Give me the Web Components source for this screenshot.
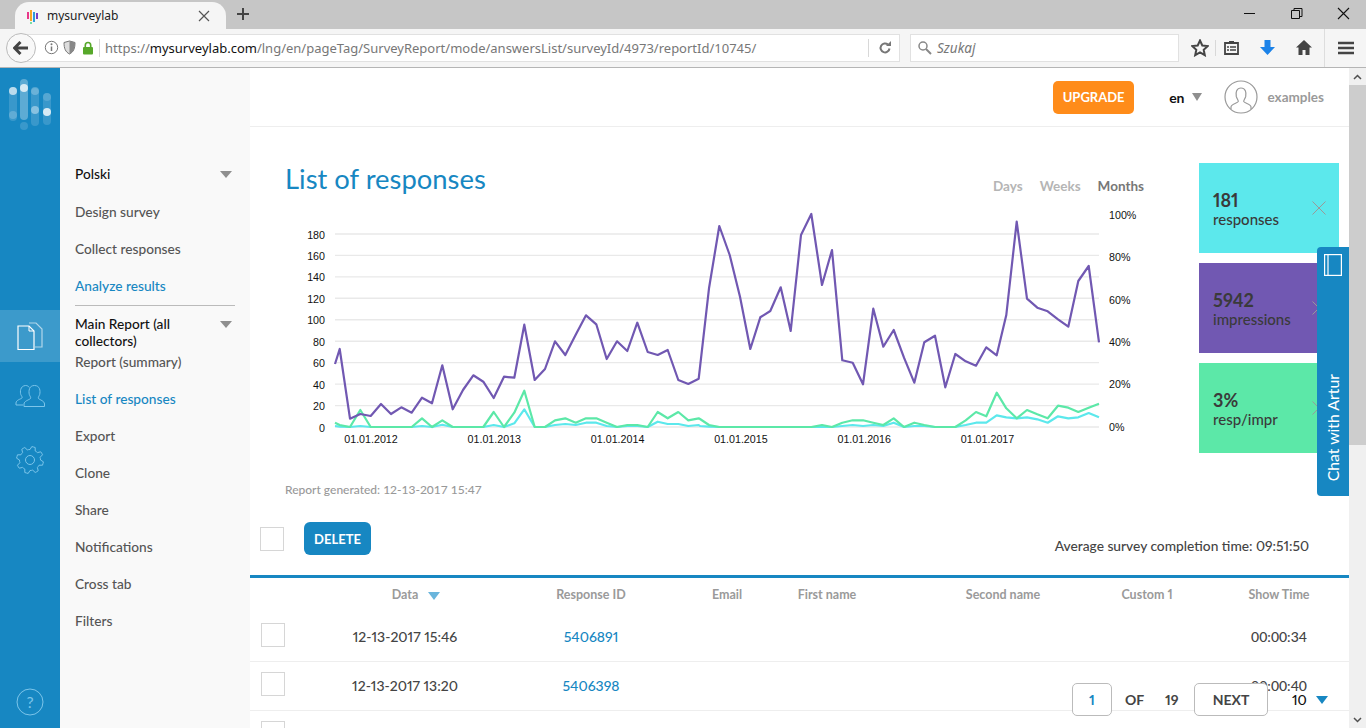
<!DOCTYPE html>
<html lang="en">
<head>
<meta charset="utf-8">
<title>mysurveylab</title>
<style>
  html, body { margin: 0; height: 100%; overflow: hidden; background: #fff; }
  body { font-family: Lato, "Open Sans", sans-serif; color: #444; position: relative; }
  .app { display: flex; height: 660px; }
</style>
</head>
<body>
<browser-chrome></browser-chrome>
<div class="app">
  <app-rail></app-rail>
  <side-nav></side-nav>
  <report-page>
    <stat-card slot="cards" value="181" label="responses" color="#5ce8ec"></stat-card>
    <stat-card slot="cards" value="5942" label="impressions" color="#7158b2"></stat-card>
    <stat-card slot="cards" value="3%" label="resp/impr" color="#5ce8a8"></stat-card>
    <response-chart slot="chart"></response-chart>
    <response-table slot="table"></response-table>
  </report-page>
  <fake-scrollbar></fake-scrollbar>
</div>
<chat-tab></chat-tab>
<page-pager></page-pager>

<script>
// small helper, every element below just sets its shadow html once
class Base extends HTMLElement {
  constructor() {
    super();
    this.attachShadow({ mode: 'open' });
  }
  connectedCallback() {
    this.shadowRoot.innerHTML = this.html();
  }
}

class BrowserChrome extends Base {
  html() {
    return `
    <style>
      :host { display: block; height: 68px; background: #c6c6c6; font-family: "Noto Sans", sans-serif; box-sizing: border-box; }
      .tabs { height: 29px; display: flex; align-items: flex-end; position: relative; }
      .tab { width: 211px; height: 27px; margin-left: 15px; background: #f5f5f5; border-radius: 14px 14px 0 0; display: flex; align-items: center; padding: 0 16px 0 11px; box-sizing: border-box; font-size: 12px; color: #222; gap: 7px; }
      .tab span { flex: 1; }
      .plus { margin: 0 0 8px 10px; width: 14px; height: 14px; }
      .win { position: absolute; top: 6px; right: 15px; display: flex; gap: 32px; }
      .win svg { width: 15px; height: 15px; display: block; }
      .tools { background: #f5f5f5; border-bottom: 1px solid #b5b5b5; display: flex; align-items: center; padding: 0 0 1px 6px; box-sizing: border-box; position: relative; height: 39px; }
      .back { width: 30px; height: 30px; border-radius: 50%; background: #f8f8f8; border: 1px solid #bbb; box-sizing: border-box; display: flex; align-items: center; justify-content: center; position: relative; z-index: 1; }
      .url { width: 879px; height: 28px; margin-left: -15px; background: #fff; border: 1px solid #e1e1e1; box-sizing: border-box; display: flex; align-items: center; padding-left: 22px; }
      .url svg { flex: none; }
      .sep { width: 1px; height: 18px; background: #d8d8d8; flex: none; }
      .addr { font-size: 13px; color: #777; white-space: nowrap; margin-left: 5px; width: 763px; overflow: hidden; }
      .addr b { font-weight: 400; color: #111; }
      .search { width: 269px; height: 28px; margin-left: 10px; background: #fff; border: 1px solid #e1e1e1; box-sizing: border-box; display: flex; align-items: center; padding-left: 6px; gap: 5px; font-size: 13.500px; font-style: italic; color: #777; }
      .icons { display: flex; align-items: center; margin-left: 12px; }
    </style>
    <div class="tabs">
      <div class="tab">
        <svg width="14" height="16" viewBox="0 0 14 16"><path d="M2 4v7" stroke="#e8388a" stroke-width="2"/><path d="M5 2v11" stroke="#f5a623" stroke-width="2"/><path d="M8 4v10" stroke="#2d9cdb" stroke-width="2"/><path d="M11 5v6" stroke="#7b3fc4" stroke-width="2"/><circle cx="5" cy="15" r="1" fill="#4cd98c"/></svg>
        <span>mysurveylab</span>
        <svg width="12" height="12" viewBox="0 0 12 12"><path d="M1 1l10 10M11 1L1 11" stroke="#555" stroke-width="1.2"/></svg>
      </div>
      <svg class="plus" viewBox="0 0 14 14"><path d="M7 1v12M1 7h12" stroke="#444" stroke-width="2"/></svg>
      <div class="win">
        <svg viewBox="0 0 15 15"><path d="M2 7.5h11" stroke="#111"/></svg>
        <svg viewBox="0 0 15 15"><path d="M2.5 4.5h8v8h-8zM5 4.5v-2h8v8h-2.500" fill="none" stroke="#111"/></svg>
        <svg viewBox="0 0 15 15"><path d="M2 2l11 11M13 2L2 13" stroke="#111" stroke-width="1.1"/></svg>
      </div>
    </div>
    <div class="tools">
      <div class="back"><svg width="16" height="14" viewBox="0 0 16 14"><path d="M7.500 1L1.500 7l6 6M2 7h13" fill="none" stroke="#444" stroke-width="3"/></svg></div>
      <div class="url">
        <svg width="15" height="15" viewBox="0 0 15 15"><circle cx="7.500" cy="7.500" r="6.200" fill="none" stroke="#777"/><path d="M7.500 6.500v4.500" stroke="#777" stroke-width="1.500"/><circle cx="7.500" cy="4.300" r="1" fill="#777"/></svg>
        <svg style="margin-left:4px" width="13" height="15" viewBox="0 0 13 15"><path d="M1 2.500l5.500-1.500 5.500 1.500c0 6-1.500 9.500-5.500 11.500C2.500 12 1 8.500 1 2.500z" fill="#ddd" stroke="#777"/><path d="M6.500 1v13c4-2 5.500-5.500 5.500-11.500z" fill="#888"/></svg>
        <svg style="margin:0 5px 0 6px" width="12" height="14" viewBox="0 0 12 14"><rect x="1" y="6" width="10" height="7.500" rx="1" fill="#57a82a"/><path d="M3.300 6.500V4.200a2.700 2.700 0 0 1 5.400 0v2.300" fill="none" stroke="#57a82a" stroke-width="1.600"/></svg>
        <div class="sep"></div>
        <div class="addr">https://<b>mysurveylab.com</b>/lng/en/pageTag/SurveyReport/mode/answersList/surveyId/4973/reportId/10745/</div>
        <div class="sep"></div>
        <svg style="margin-left:9px" width="14" height="14" viewBox="0 0 14 14"><path d="M11.500 7.500a4.500 4.500 0 1 1-1.500-4" fill="none" stroke="#777" stroke-width="2"/><path d="M8 5h5V0z" fill="#777"/></svg>
      </div>
      <div class="search">
        <svg width="15" height="15" viewBox="0 0 15 15"><circle cx="6" cy="6" r="4" fill="none" stroke="#888" stroke-width="1.500"/><path d="M9 9l5 5" stroke="#888" stroke-width="2"/></svg>
        Szukaj
      </div>
      <div class="icons">
        <svg width="18" height="18" viewBox="0 0 18 18"><path d="M9 1.500l2.300 5 5.400.6-4 3.700 1.100 5.400L9 13.500l-4.800 2.700 1.100-5.400-4-3.700 5.400-.6z" fill="none" stroke="#444" stroke-width="2"/></svg>
        <div class="sep" style="margin:0 8px 0 6px;height:16px"></div>
        <svg width="15" height="15" viewBox="0 0 15 15"><path d="M1 3h13v11H1z" fill="none" stroke="#444" stroke-width="1.800"/><path d="M5 1h5v3H5z" fill="#444"/><path d="M3 7h2M6 7h6M3 10h2M6 10h6" stroke="#444" stroke-width="1.500"/></svg>
        <svg style="margin-left:21px" width="15" height="15" viewBox="0 0 15 15"><path d="M4.500 0h6v7H15l-7.500 8L0 7h4.500z" fill="#1b82e8"/></svg>
        <svg style="margin-left:21px" width="16" height="15" viewBox="0 0 16 15"><path d="M8 0L0 7.500h2.500V15h4v-5h3v5h4V7.500H16z" fill="#444"/></svg>
        <div class="sep" style="margin:0 13px 0 12px;height:38px;background:#ddd"></div>
        <svg width="16" height="14" viewBox="0 0 16 14"><path d="M0 2h16M0 7h16M0 12h16" stroke="#444" stroke-width="2.600"/></svg>
      </div>
    </div>`;
  }
}

class AppRail extends Base {
  html() {
    // gear outline is worked out here, easier than typing out 8 teeth
    let gear = '';
    for (let i = 0; i < 48; i++) {
      const a = (i / 48) * Math.PI * 2;
      const r = (i % 6 < 3) ? 13.5 : 10.5;
      gear += (i ? 'L' : 'M') + (14 + Math.cos(a + .13) * r).toFixed(1) + ' ' + (14 + Math.sin(a + .13) * r).toFixed(1);
    }
    return `
    <style>
      :host { display: flex; flex-direction: column; width: 60px; flex: none; background: #1787c2; align-items: center; position: relative; }
      .logo { width: 60px; height: 70px; margin-top: 8px; flex: none; display: block; }
      .item { width: 60px; flex: none; display: flex; align-items: center; justify-content: center; }
      .docs { height: 52px; margin-top: 164px; background: rgba(255,255,255,.16); }
      .people { height: 40px; margin-top: 14px; }
      .gear { height: 40px; margin-top: 24px; }
      .help { margin-top: auto; margin-bottom: 12px; height: 28px; }
    </style>
    <svg class="logo" viewBox="0 76 60 70">
      <g fill="#fff">
        <rect x="9" y="87" width="8" height="34" rx="4" opacity=".15"/>
        <rect x="20" y="79" width="8" height="41" rx="4" opacity=".3"/>
        <rect x="31" y="88" width="8" height="38" rx="4" opacity=".15"/>
        <rect x="43" y="93" width="8" height="32" rx="4" opacity=".15"/>
        <circle cx="13" cy="91" r="4" opacity=".65"/>
        <circle cx="13" cy="115" r="4" opacity=".2"/>
        <circle cx="24" cy="88" r="4" opacity=".75"/>
        <circle cx="24" cy="126" r="4" opacity=".15"/>
        <circle cx="35" cy="91" r="4" opacity=".25"/>
        <circle cx="35" cy="110" r="4" opacity=".4"/>
        <circle cx="47" cy="97" r="4" opacity=".15"/>
        <circle cx="47" cy="112" r="4" opacity=".8"/>
      </g>
    </svg>
    <div class="item docs">
      <svg width="26" height="30" viewBox="0 0 26 30" fill="none"><path d="M12 2h7l6 6v18h-7" stroke="#fff" stroke-opacity=".6" stroke-width="1.200"/><path d="M1 5h11l5 5v18.500H1z" stroke="#fff" stroke-width="1.200"/><path d="M12 5v5h5" stroke="#fff" stroke-width="1"/></svg>
    </div>
    <div class="item people">
      <svg width="30" height="24" viewBox="0 0 30 24" fill="none" stroke="#7cc5ea" stroke-width="1"><path d="M8 21H1v-2c0-3 5-4 6-5 .6-1-.6-2-1.200-3.500C5 8 5 2 10.500 1.500c2 0 3 .8 3.800 2"/><path d="M9 22.500v-2.500c0-3 5-4 6.500-5.500.7-1-.6-2.300-1.200-4C13.500 7 14 1.500 19.500 1.500S25.500 7 24.700 10.500c-.6 1.700-1.900 3-1.200 4 1.500 1.500 6 2.500 6 5.500v2.500z"/></svg>
    </div>
    <div class="item gear">
      <svg width="28" height="28" viewBox="0 0 28 28" fill="none" stroke="#7cc5ea" stroke-width="1"><path d="${gear}Z"/><circle cx="14" cy="14" r="4.500"/></svg>
    </div>
    <div class="item help">
      <svg width="28" height="28" viewBox="0 0 28 28" fill="none"><circle cx="14" cy="14" r="13" stroke="#7cc5ea"/><text x="14" y="19.500" text-anchor="middle" font-family="Lato, sans-serif" font-size="16" fill="#7cc5ea">?</text></svg>
    </div>`;
  }
}

class SideNav extends Base {
  html() {
    const item = (t, on) => `<a class="${on ? 'on' : ''}">${t}</a>`;
    return `
    <style>
      :host { display: block; width: 190px; flex: none; background: #f9f9f9; font-size: 13.700px; font-weight: 500; padding: 97px 15px 0; box-sizing: border-box; color: #555; }
      .head { display: flex; justify-content: space-between; color: #111; line-height: 17px; }
      .head i { flex: none; width: 0; height: 0; border: 6px solid transparent; border-top: 7px solid #8f8f8f; border-bottom: 0; margin: 6px 3px 0 0; }
      a { display: block; line-height: 17px; margin-top: 20px; white-space: nowrap; }
      .head:not(.sub) + a { margin-top: 21px; }
      a.on { color: #1787c2; }
      hr { border: 0; border-top: 1px solid #bbb; margin: 11px 0 9px; }
      .head.sub + a { margin-top: 4px; }
      .head span { width: 130px; }
    </style>
    <div class="head"><span>Polski</span><i></i></div>
    ${item('Design survey')}
    ${item('Collect responses')}
    ${item('Analyze results', true)}
    <hr>
    <div class="head sub"><span>Main Report (all collectors)</span><i></i></div>
    ${item('Report (summary)')}
    ${item('List of responses', true)}
    ${item('Export')}
    ${item('Clone')}
    ${item('Share')}
    ${item('Notifications')}
    ${item('Cross tab')}
    ${item('Filters')}`;
  }
}

class StatCard extends Base {
  html() {
    return `
    <style>
      :host { display: flex; align-items: center; justify-content: space-between; width: 140px; height: 90px; box-sizing: border-box; padding: 0 13px 0 14px; background: ${this.getAttribute('color')}; color: #3a3a3a; font-variant-numeric: proportional-nums; }
      b { display: block; font-size: 18px; line-height: 22px; font-weight: 700; }
      span { display: block; font-size: 15px; line-height: 17px; font-weight: 500; }
      svg { flex: none; }
    </style>
    <div><b>${this.getAttribute('value')}</b><span>${this.getAttribute('label')}</span></div>
    <svg width="14" height="14" viewBox="0 0 14 14"><path d="M.5.500l13 13M13.500.500l-13 13" stroke="#999"/></svg>`;
  }
}

const toPts = (list, ox) => list.map(([x, y]) => [ox + x / 3, 200 + y / 3]);
const PURPLE = [...toPts([[165,492],[179,447],[210,656],[241,642],[272,648],[303,612],[333,642],[364,622],[395,638],[426,593],[456,610],[487,496],[518,628],[549,570],[580,526],[610,545],[641,594],[672,530],[703,533],[733,374],[764,540],[795,507],[825,424],[856,465],[887,404],[918,346],[949,373],[980,477],[1011,424],[1042,453],[1072,368],[1103,456],[1133,465],[1163,450],[1195,540],[1225,552],[1256,536]], 280),
  ...toPts([[27,265],[58,78],[89,165],[120,290],[151,447],[181,352],[211,333],[242,262],[272,393],[303,105],[334,42],[366,255],[396,150],[427,481],[458,488],[489,553],[520,326],[550,440],[581,390],[612,473],[643,548],[673,427],[705,407],[736,562],[766,462],[797,484],[828,497],[859,442],[890,466],[919,345],[950,65],[981,296],[1012,323],[1043,334],[1074,358],[1105,380],[1135,243],[1166,198],[1197,427]], 700)];
const GREEN = [...toPts([[165,668],[179,675],[210,681],[241,630],[272,681],[395,681],[426,655],[456,681],[487,661],[518,681],[610,681],[641,636],[672,681],[703,638],[733,572],[764,681],[795,681],[825,661],[856,655],[887,668],[918,655],[949,655],[980,668],[1011,681],[1042,675],[1072,675],[1103,681],[1133,636],[1163,655],[1195,636],[1225,661],[1256,655]], 280),
  ...toPts([[0,657],[27,675],[58,681],[334,681],[366,675],[396,681],[427,668],[458,661],[489,661],[520,668],[550,675],[581,655],[612,681],[643,668],[673,675],[705,681],[766,681],[797,661],[828,636],[859,649],[890,578],[919,625],[950,655],[981,630],[1012,643],[1043,655],[1074,617],[1105,623],[1135,636],[1166,623],[1197,611]], 700)];
const CYAN = [...toPts([[165,678],[179,680],[210,681],[241,678],[272,681],[395,681],[426,678],[456,681],[487,674],[518,681],[610,681],[641,675],[672,681],[703,670],[733,628],[764,681],[795,681],[825,675],[856,672],[887,675],[918,668],[949,668],[980,678],[1011,681],[1042,678],[1072,678],[1103,681],[1133,665],[1163,672],[1195,672],[1225,678],[1256,675]], 280),
  ...toPts([[0,678],[27,680],[58,681],[334,681],[396,681],[427,678],[458,675],[489,678],[520,675],[550,678],[581,668],[612,681],[643,678],[673,678],[705,681],[766,681],[797,675],[828,668],[859,668],[890,646],[919,652],[950,655],[981,652],[1012,658],[1043,668],[1074,649],[1105,655],[1135,652],[1166,639],[1197,652]], 700)];

class ResponseChart extends Base {
  html() {
    const line = (pts, c) => `<polyline fill="none" stroke="${c}" stroke-width="2.200" stroke-linejoin="round" points="${pts.map(p => p[0].toFixed(1) + ',' + p[1].toFixed(1)).join(' ')}"/>`;
    let grid = '', left = '', right = '', years = '';
    for (let i = 0; i <= 9; i++) {
      const y = 427 - i * 21.45;
      grid += `<path d="M335 ${y.toFixed(1)}H1099" stroke="#e9e9e9" stroke-width="1.400"/>`;
      left += `<text x="325" y="${(y + 4.500).toFixed(1)}" text-anchor="end">${i * 20}</text>`;
    }
    for (let i = 0; i <= 5; i++) {
      right += `<text x="1109" y="${(430.500 - i * 42.3).toFixed(1)}">${i * 20}%</text>`;
      years += `<text x="${(371 + i * 123.300).toFixed(1)}" y="443" text-anchor="middle">01.01.${2012 + i}</text>`;
    }
    return `
    <style>
      :host { display: block; width: 870px; height: 240px; }
      svg { display: block; font-family: "Liberation Sans", Arial, sans-serif; font-size: 10.700px; fill: #111; }
    </style>
    <svg width="870" height="240" viewBox="285 205 870 240">
      ${grid}${left}${right}${years}
      ${line(CYAN, '#5ce8ec')}
      ${line(GREEN, '#5ce8a8')}
      ${line(PURPLE, '#7158b2')}
    </svg>`;
  }
}

class ReportPage extends Base {
  html() {
    return `
    <style>
      :host { display: block; width: 1099px; flex: none; overflow: hidden; background: #fff; }
      .top { height: 58px; border-bottom: 1px solid #eee; display: flex; align-items: center; justify-content: flex-end; padding-right: 25px; }
      .upgrade { width: 81px; height: 33px; border-radius: 5px; background: #ff8c1a; color: #fff; font-weight: 700; font-size: 13px; display: flex; align-items: center; justify-content: center; }
      .lang { font-weight: 700; font-size: 14px; color: #111; margin-left: 35px; display: flex; align-items: center; gap: 7px; }
      .lang i { width: 0; height: 0; border: 5.500px solid transparent; border-top: 8px solid #8f8f8f; border-bottom: 0; }
      .top svg { margin-left: 22px; }
      .user { margin-left: 10px; color: #9a9a9a; font-weight: 700; font-size: 13.500px; }
      .mid { display: flex; height: 395px; }
      .left { width: 949px; padding: 36px 0 0 35px; box-sizing: border-box; }
      .title { display: flex; justify-content: space-between; align-items: flex-end; width: 859px; height: 32px; margin-bottom: 10px; }
      h1 { margin: 0; font-size: 27.400px; line-height: 33px; font-weight: 400; color: #1787c2; }
      .range { display: flex; gap: 17px; font-size: 13.500px; font-weight: 700; color: #b5b5b5; line-height: 18px; }
      .range .on { color: #777; }
      .gen { margin-top: 37px; font-size: 12px; line-height: 16px; font-weight: 500; color: #999; }
      .cards { display: flex; flex-direction: column; gap: 10px; padding-top: 36px; }
    </style>
    <div class="top">
      <div class="upgrade">UPGRADE</div>
      <div class="lang">en<i></i></div>
      <svg width="34" height="34" viewBox="0 0 34 34" fill="none" stroke="#999" stroke-width="1.200"><circle cx="17" cy="17" r="16"/><path d="M7 29v-2c0-3 6-3.500 7.300-5.500.3-1-1.300-2.700-2-5-.9-4 .3-8.500 4.700-8.500s5.600 4.500 4.700 8.500c-.7 2.300-2.300 4-2 5 1.300 2 7.300 2.500 7.300 5.500v2"/></svg>
      <div class="user">examples</div>
    </div>
    <div class="mid">
      <div class="left">
        <div class="title"><h1>List of responses</h1>
          <div class="range"><span>Days</span><span>Weeks</span><span class="on">Months</span></div></div>
        <slot name="chart"></slot>
        <div class="gen">Report generated: 12-13-2017 15:47</div>
      </div>
      <div class="cards"><slot name="cards"></slot></div>
    </div>
    <slot name="table"></slot>`;
  }
}

class ResponseTable extends Base {
  html() {
    const row = (d, id, t) => `
      <div class="row">
        <div><i class="box"></i></div><div class="date">${d}</div><div class="id">${id}</div>
        <div></div><div></div><div></div><div></div><div class="time">${t}</div>
      </div>`;
    return `
    <style>
      :host { display: block; font-size: 14px; font-weight: 500; color: #444; }
      .tools { height: 53px; display: flex; align-items: flex-start; border-bottom: 3px solid #1787c2; padding-left: 10px; position: relative; }
      .box { display: block; width: 24px; height: 24px; box-sizing: border-box; border: 1px solid #d6d6d6; background: #fff; }
      .tools .box { margin-top: 5px; }
      .del { margin: 0 0 0 20px; width: 67px; height: 33px; border-radius: 6px; background: #1787c2; color: #fff; font-weight: 700; font-size: 13px; display: flex; align-items: center; justify-content: center; }
      .avg { margin-left: auto; margin-right: 40px; margin-top: 15px; line-height: 17px; font-size: 13.750px; font-variant-numeric: proportional-nums; }
      .grid, .row { display: grid; grid-template-columns: 46px 218px 154px 118px 82px 205px 124px 132px; text-align: center; }
      .grid > div:nth-child(6), .row > div:nth-child(6) { padding-left: 65px; }
      .grid > div:nth-child(7), .row > div:nth-child(7) { padding-left: 24px; }
      .grid > div:nth-child(8), .row > div:nth-child(8) { padding-left: 32px; }
      .grid { height: 35px; padding-bottom: 2px; align-items: center; font-size: 12.500px; font-weight: 700; color: #9a9a9a; box-sizing: border-box; font-variant-numeric: proportional-nums; }
      .grid i { display: inline-block; width: 0; height: 0; border: 6px solid transparent; border-top: 8px solid #6ab5dc; border-bottom: 0; margin: 0 -22px 0 10px; vertical-align: -1px; }
      .row { height: 49px; padding-bottom: 2px; align-items: center; border-bottom: 1px solid #eee; box-sizing: border-box; }
      .row .box { margin: -3px 0 0 11px; }
      .date, .id { font-variant-numeric: proportional-nums; }
      .id { color: #1787c2; }
    </style>
    <div class="tools"><i class="box"></i><div class="del">DELETE</div><div class="avg">Average survey completion time: 09:51:50</div></div>
    <div class="grid">
      <div></div><div>Data<i></i></div><div>Response ID</div><div>Email</div><div>First name</div><div>Second name</div><div>Custom 1</div><div>Show Time</div>
    </div>
    ${row('12-13-2017 15:46', '5406891', '00:00:34')}
    ${row('12-13-2017 13:20', '5406398', '00:00:40')}
    ${row('', '', '')}`;
  }
}

class FakeScrollbar extends Base {
  html() {
    return `
    <style>
      :host { display: flex; flex-direction: column; width: 17px; flex: none; background: #f0f0f0; }
      .btn { height: 17px; flex: none; display: flex; align-items: center; justify-content: center; }
      .thumb { height: 360px; background: #cdcdcd; flex: none; }
      .rest { flex: 1; }
    </style>
    <div class="btn"><svg width="9" height="6" viewBox="0 0 9 6"><path d="M1 5l3.500-3.500L8 5" fill="none" stroke="#505050" stroke-width="1.500"/></svg></div>
    <div class="thumb"></div><div class="rest"></div>
    <div class="btn"><svg width="9" height="6" viewBox="0 0 9 6"><path d="M1 1l3.500 3.500L8 1" fill="none" stroke="#505050" stroke-width="1.500"/></svg></div>`;
  }
}

class ChatTab extends Base {
  html() {
    return `
    <style>
      :host { position: absolute; left: 1317px; top: 247px; width: 32px; height: 249px; background: #1787c2; border-radius: 4px 0 0 4px; display: flex; flex-direction: column; align-items: center; color: #fff; font-family: Lato, sans-serif; }
      svg { margin-top: 7px; flex: none; }
      span { writing-mode: vertical-rl; transform: rotate(180deg); margin-top: auto; margin-bottom: 15px; font-size: 15.800px; line-height: 20px; white-space: nowrap; }
    </style>
    <svg width="18" height="22" viewBox="0 0 18 22" fill="none" stroke="#fff" stroke-width="1.200"><rect x=".6" y=".6" width="16.800" height="20.800"/><path d="M4 .6v20.800"/></svg>
    <span>Chat with Artur</span>`;
  }
}

class PagePager extends Base {
  html() {
    return `
    <style>
      :host { position: absolute; left: 1072px; top: 683px; display: flex; align-items: center; height: 33px; font-size: 14px; font-weight: 700; color: #444; font-variant-numeric: proportional-nums; }
      .box { height: 33px; background: #fff; border: 1px solid #bbb; border-radius: 5px; box-sizing: border-box; display: flex; align-items: center; justify-content: center; }
      .one { width: 40px; color: #1787c2; }
      .of { margin-left: 13px; width: 40px; }
      .tot { width: 29px; }
      .next { width: 74px; }
      .size { margin-left: 24px; color: #111; font-weight: 500; }
      i { width: 0; height: 0; border: 6px solid transparent; border-top: 8px solid #1787c2; border-bottom: 0; margin-left: 9px; }
    </style>
    <div class="box one">1</div><span class="of">OF</span><span class="tot">19</span><div class="box next">NEXT</div><span class="size">10</span><i></i>`;
  }
}

customElements.define('browser-chrome', BrowserChrome);
customElements.define('app-rail', AppRail);
customElements.define('side-nav', SideNav);
customElements.define('stat-card', StatCard);
customElements.define('response-chart', ResponseChart);
customElements.define('report-page', ReportPage);
customElements.define('response-table', ResponseTable);
customElements.define('fake-scrollbar', FakeScrollbar);
customElements.define('chat-tab', ChatTab);
customElements.define('page-pager', PagePager);
</script>
</body>
</html>
